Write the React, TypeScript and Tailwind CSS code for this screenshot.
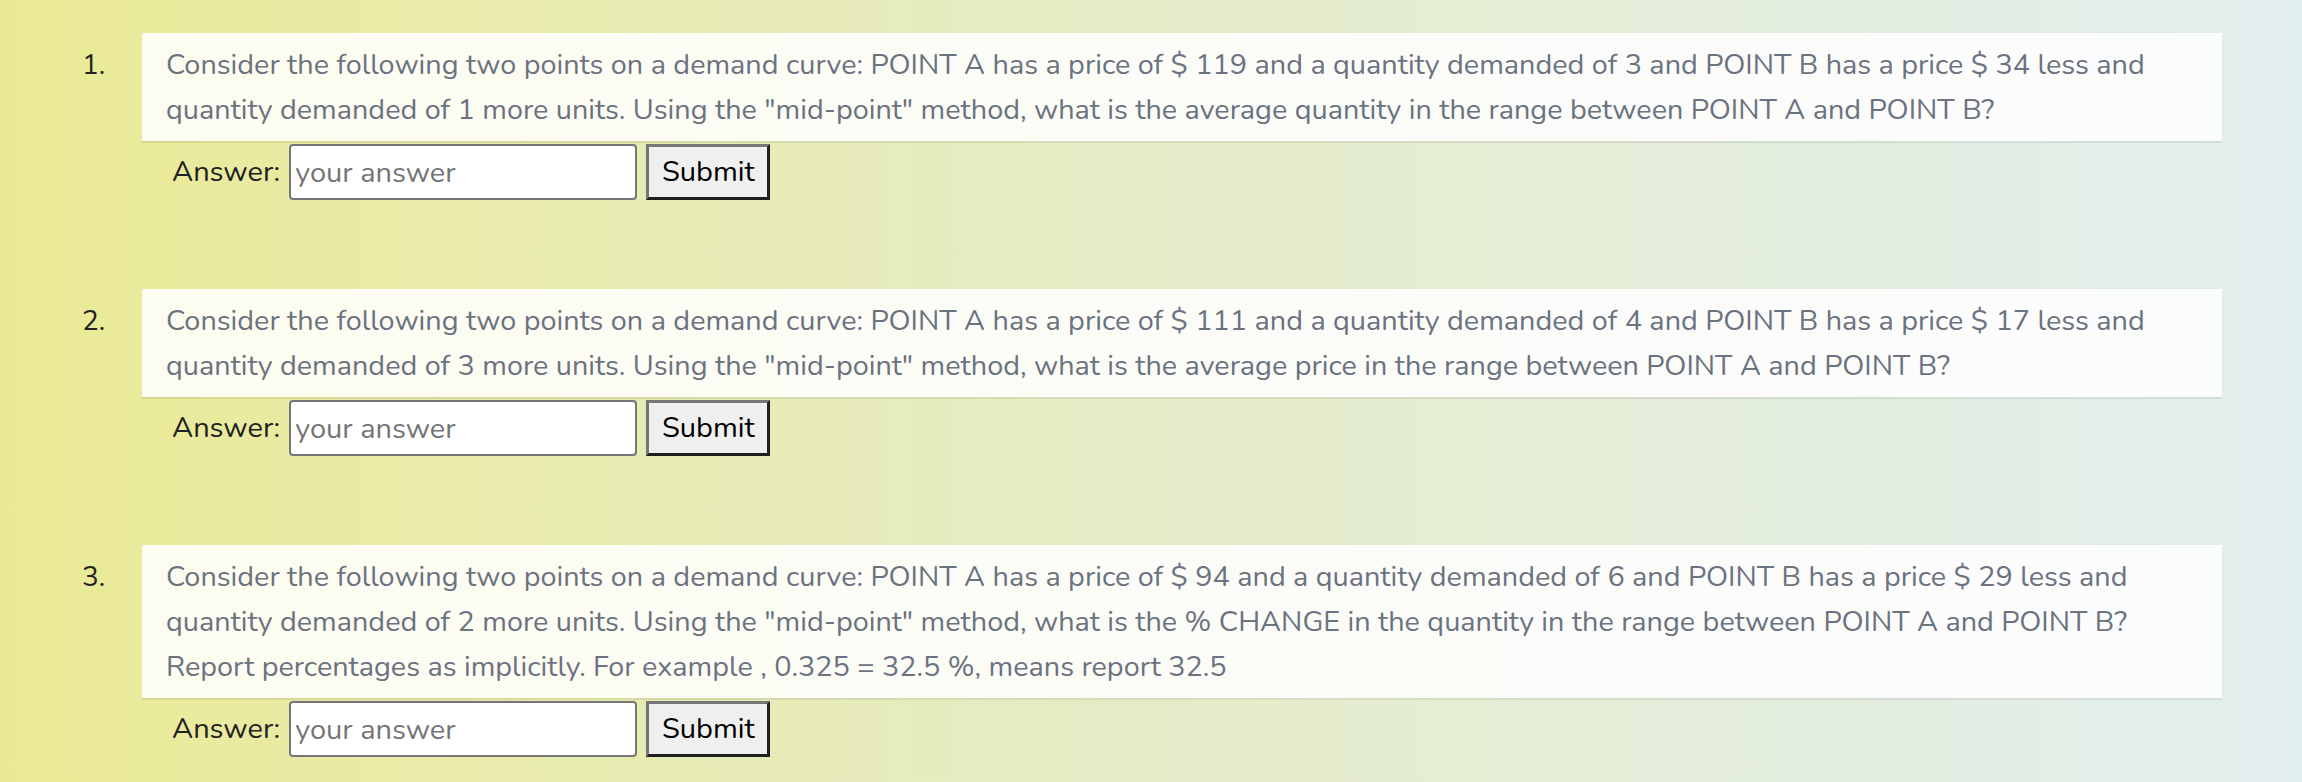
import React from 'react';

const QUESTIONS = [
  {
    id: 1,
    text: 'Consider the following two points on a demand curve: POINT A has a price of $ 119 and a quantity demanded of 3 and POINT B has a price $ 34 less and quantity demanded of 1 more units. Using the "mid-point" method, what is the average quantity in the range between POINT A and POINT B?',
  },
  {
    id: 2,
    text: 'Consider the following two points on a demand curve: POINT A has a price of $ 111 and a quantity demanded of 4 and POINT B has a price $ 17 less and quantity demanded of 3 more units. Using the "mid-point" method, what is the average price in the range between POINT A and POINT B?',
  },
  {
    id: 3,
    text: 'Consider the following two points on a demand curve: POINT A has a price of $ 94 and a quantity demanded of 6 and POINT B has a price $ 29 less and quantity demanded of 2 more units. Using the "mid-point" method, what is the % CHANGE in the quantity in the range between POINT A and POINT B? Report percentages as implicitly. For example , 0.325 = 32.5 %, means report 32.5',
  },
];

const Question = ({ n, text }: { n: number; text: string }) => (
  <div className="flex">
    <div className="w-[60px] shrink-0 pt-[10px] text-[28px] leading-[45px] text-[#222]">{n}.</div>
    <div className="flex-1">
      <div className="bg-white/85 py-[9px] pl-[24px] pr-[40px] text-[28.8px] leading-[45px] text-[#6b7280] shadow-[0_2px_0_rgba(0,0,0,0.07)]">
        {text}
      </div>
      <div className="mt-[3px] flex items-center pl-[30px] text-[29px] text-[#222]">
        <span className="mr-[9px]">Answer:</span>
        <input
          type="text"
          placeholder="your answer"
          className="h-[56px] w-[348px] rounded-[4px] border-2 border-[#767676] bg-white px-[4px] text-[29px] text-[#222] placeholder:text-[#757575] outline-none"
        />
        <button className="ml-[9px] h-[56px] w-[124px] border-[3px] border-t-[#767676] border-l-[#767676] border-b-[#1f1f1f] border-r-[#1f1f1f] bg-[#efefef] text-[29px] text-black">
          Submit
        </button>
      </div>
    </div>
  </div>
);

export default function App() {
  return (
    <div
      className="min-h-screen bg-gradient-to-r from-[#eaea94] via-[#e6ecc8] to-[#e1eeee] pl-[82px] pr-[80px] pt-[33px]"
      style={{ fontFamily: 'Nunito, Lato, "Noto Sans", sans-serif' }}
    >
      <div className="flex flex-col gap-[89px]">
        {QUESTIONS.map((q) => (
          <Question key={q.id} n={q.id} text={q.text} />
        ))}
      </div>
    </div>
  );
}
